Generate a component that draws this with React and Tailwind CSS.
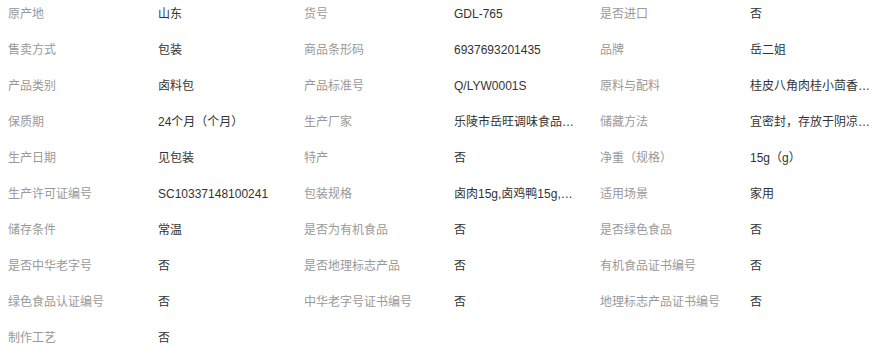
import React from "react";

const items = [
  ["原产地", "山东"],
  ["货号", "GDL-765"],
  ["是否进口", "否"],
  ["售卖方式", "包装"],
  ["商品条形码", "6937693201435"],
  ["品牌", "岳二姐"],
  ["产品类别", "卤料包"],
  ["产品标准号", "Q/LYW0001S"],
  ["原料与配料", "桂皮八角肉桂小茴香草果香叶"],
  ["保质期", "24个月（个月）"],
  ["生产厂家", "乐陵市岳旺调味食品有限公司"],
  ["储藏方法", "宜密封，存放于阴凉干燥处"],
  ["生产日期", "见包装"],
  ["特产", "否"],
  ["净重（规格）", "15g（g）"],
  ["生产许可证编号", "SC10337148100241"],
  ["包装规格", "卤肉15g,卤鸡鸭15g,卤猪蹄15g"],
  ["适用场景", "家用"],
  ["储存条件", "常温"],
  ["是否为有机食品", "否"],
  ["是否绿色食品", "否"],
  ["是否中华老字号", "否"],
  ["是否地理标志产品", "否"],
  ["有机食品证书编号", "否"],
  ["绿色食品认证编号", "否"],
  ["中华老字号证书编号", "否"],
  ["地理标志产品证书编号", "否"],
  ["制作工艺", "否"],
];

export default function App() {
  return (
    <div
      className="w-[877px] h-[362px] bg-white overflow-hidden"
      style={{ fontFamily: '"Liberation Sans", "Noto Sans CJK SC", sans-serif' }}
    >
      <ul className="grid grid-cols-[296px_296px_1fr]">
        {items.map(([k, v], i) => (
          <li key={i} className="flex h-[28px] mb-[8px] items-center pl-[8px] text-[12px] leading-[28px]">
            <span className="w-[150px] shrink-0 text-[#999999] whitespace-nowrap">{k}</span>
            <span className="max-w-[124px] truncate text-[#333333]">{v}</span>
          </li>
        ))}
      </ul>
    </div>
  );
}
